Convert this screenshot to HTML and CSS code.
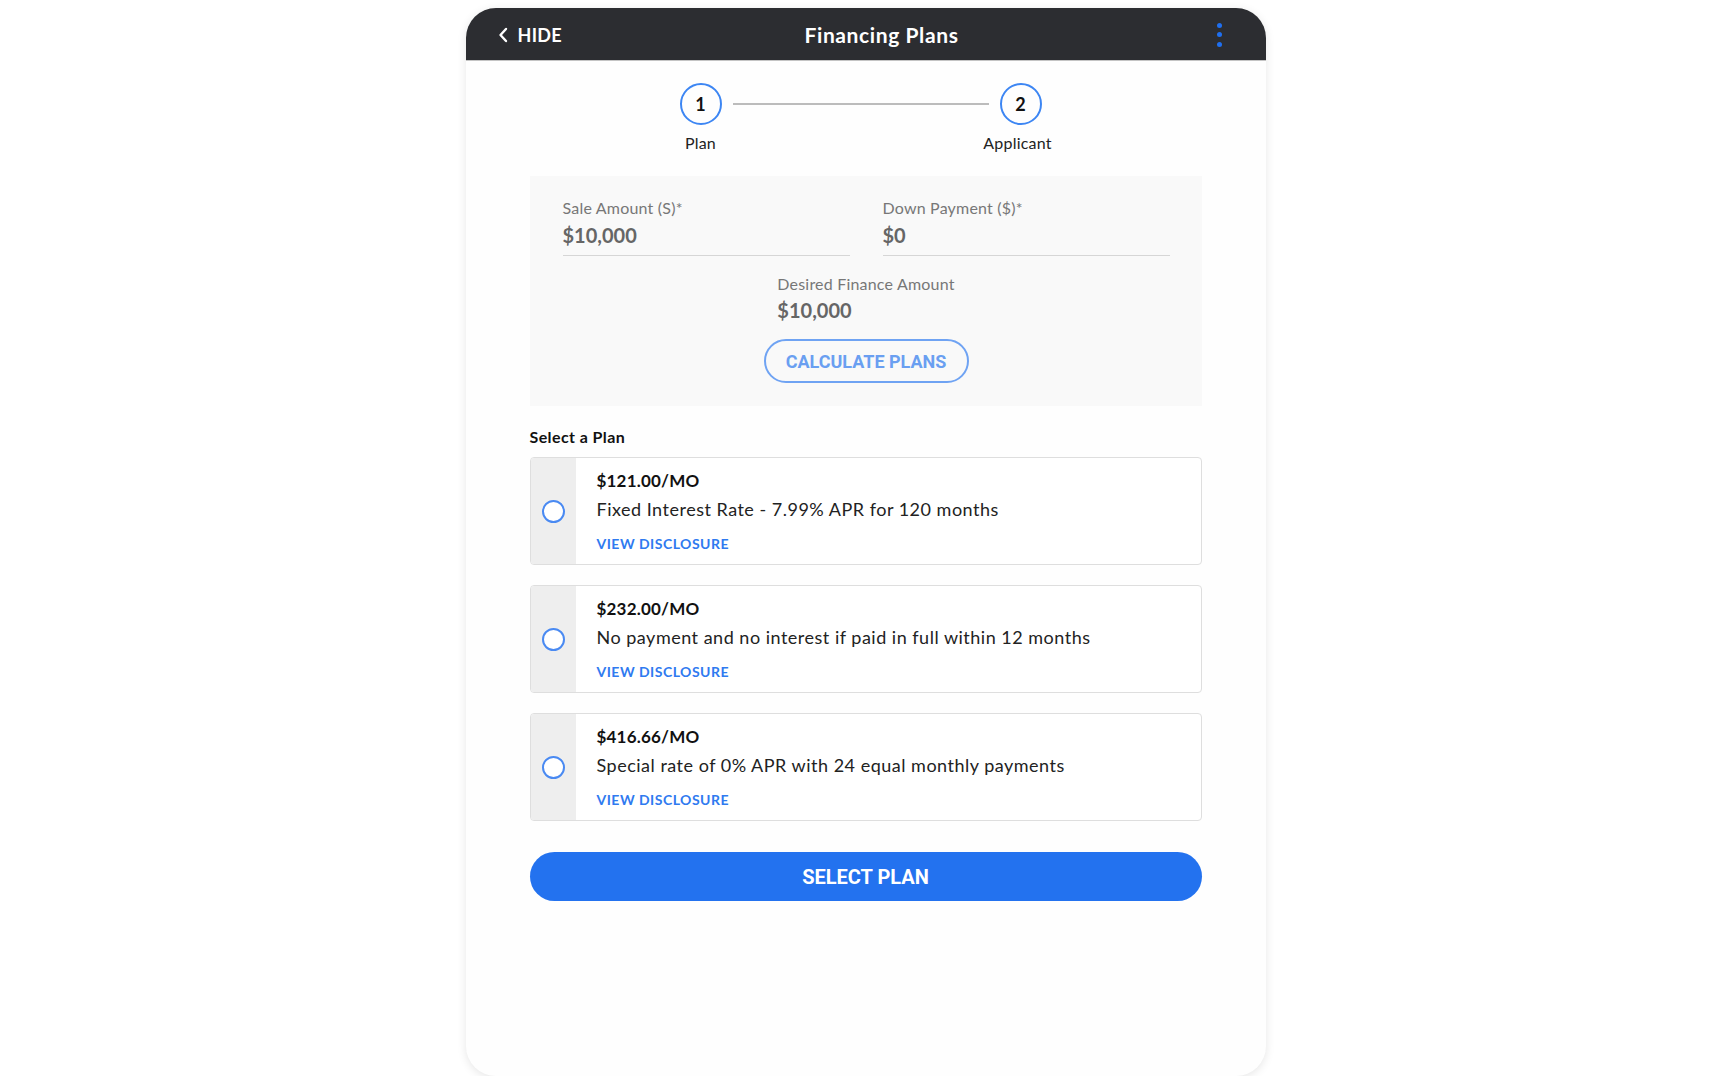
FILE: index.html
```html
<!DOCTYPE html>
<html lang="en">
<head>
<meta charset="utf-8">
<title>Financing Plans</title>
<link rel="stylesheet" href="styles.css">
</head>
<body>
<div class="card">
  <header class="topbar">
    <div class="hide">
      <svg class="chev" width="10" height="16" viewBox="0 0 10 16"><path d="M8 2 L2.5 8 L8 14" fill="none" stroke="#ffffff" stroke-width="2.4" stroke-linecap="round" stroke-linejoin="round"/></svg>
      <span>HIDE</span>
    </div>
    <div class="title">Financing Plans</div>
    <div class="more">
      <span class="dot"></span><span class="dot"></span><span class="dot"></span>
    </div>
  </header>

  <div class="stepper">
    <div class="step">
      <div class="circle">1</div>
      <div class="step-label">Plan</div>
    </div>
    <div class="step-line"></div>
    <div class="step">
      <div class="circle">2</div>
      <div class="step-label step-label-2">Applicant</div>
    </div>
  </div>

  <section class="calc">
    <div class="fields">
      <div class="field">
        <div class="field-label">Sale Amount (S)*</div>
        <div class="field-value">$10,000</div>
      </div>
      <div class="field">
        <div class="field-label">Down Payment ($)*</div>
        <div class="field-value">$0</div>
      </div>
    </div>
    <div class="desired">
      <div class="field-label">Desired Finance Amount</div>
      <div class="field-value">$10,000</div>
    </div>
    <div class="calc-row">
      <button class="btn-outline">CALCULATE PLANS</button>
    </div>
  </section>

  <div class="plans">
    <div class="plans-title">Select a Plan</div>

    <div class="plan">
      <div class="plan-side"><span class="radio"></span></div>
      <div class="plan-body">
        <div class="plan-price">$121.00/MO</div>
        <div class="plan-desc">Fixed Interest Rate - 7.99% APR for 120 months</div>
        <div class="plan-link">VIEW DISCLOSURE</div>
      </div>
    </div>

    <div class="plan">
      <div class="plan-side"><span class="radio"></span></div>
      <div class="plan-body">
        <div class="plan-price">$232.00/MO</div>
        <div class="plan-desc">No payment and no interest if paid in full within 12 months</div>
        <div class="plan-link">VIEW DISCLOSURE</div>
      </div>
    </div>

    <div class="plan">
      <div class="plan-side"><span class="radio"></span></div>
      <div class="plan-body">
        <div class="plan-price">$416.66/MO</div>
        <div class="plan-desc">Special rate of 0% APR with 24 equal monthly payments</div>
        <div class="plan-link">VIEW DISCLOSURE</div>
      </div>
    </div>

    <button class="btn-primary">SELECT PLAN</button>
  </div>
</div>
</body>
</html>
```

FILE: styles.css
```css
* { box-sizing: border-box; }

html, body {
  margin: 0;
  padding: 0;
  background: #ffffff;
}

body {
  font-family: "Lato", "Noto Sans", sans-serif;
  color: #222222;
}

.card {
  width: 800px;
  height: 1068px;
  margin: 8px auto 0;
  background: #fefefe;
  border-radius: 30px;
  overflow: hidden;
  box-shadow: 0 2px 10px rgba(0, 0, 0, 0.10);
}

/* header */
.topbar {
  height: 53px;
  background: #2c2d31;
  border-bottom: 1px solid #c4c4c4;
  display: grid;
  grid-template-columns: 1fr auto 1fr;
  align-items: center;
  padding: 0 44px 0 32px;
  color: #ffffff;
}

.hide {
  display: flex;
  align-items: center;
  gap: 10px;
  font-weight: 700;
  font-size: 18px;
  letter-spacing: 0.3px;
  padding-top: 1px;
}

.chev { display: block; }

.title {
  font-weight: 700;
  font-size: 21px;
  letter-spacing: 0.6px;
  margin-left: 44px;
}

.more {
  justify-self: end;
  display: flex;
  flex-direction: column;
  gap: 4.5px;
  padding-top: 1px;
}

.dot {
  width: 5px;
  height: 5px;
  border-radius: 50%;
  background: #1f6ff0;
}

/* stepper */
.stepper {
  display: flex;
  justify-content: center;
  padding: 22px 10px 0 0;
}

.step {
  width: 64px;
  display: flex;
  flex-direction: column;
  align-items: center;
}

.circle {
  width: 42px;
  height: 42px;
  border: 2px solid #3d86f3;
  border-radius: 50%;
  display: flex;
  align-items: center;
  justify-content: center;
  font-weight: 700;
  font-size: 18px;
  color: #111111;
}

.step-label {
  margin-top: 8px;
  font-size: 16px;
  line-height: 20px;
  letter-spacing: 0.2px;
  white-space: nowrap;
  color: #222222;
}

.step-label-2 { margin-right: 6px; }

.step-line {
  width: 256px;
  height: 2px;
  margin-top: 20px;
  background: #bcbcbc;
}

/* calc panel */
.calc {
  margin: 23px 64px 0;
  background: #f9f9f9;
  padding: 22px 32px 23px 33px;
}

.fields {
  display: grid;
  grid-template-columns: 1fr 1fr;
  gap: 33px;
}

.field {
  border-bottom: 1px solid #d6d6d6;
  padding-bottom: 7px;
}

.field-label {
  font-size: 16px;
  line-height: 20px;
  letter-spacing: 0.2px;
  white-space: nowrap;
  color: #777777;
}

.field-value {
  margin-top: 4px;
  font-size: 20px;
  font-weight: 700;
  line-height: 26px;
  color: #666666;
}

.desired {
  width: max-content;
  margin: 18px auto 0;
}

.desired .field-value { margin-top: 3px; }

.calc-row {
  display: flex;
  justify-content: center;
  margin-top: 16px;
}

.btn-outline {
  width: 205px;
  height: 44px;
  border: 2px solid #6fa3f3;
  border-radius: 22px;
  background: transparent;
  color: #6a9ff1;
  font-family: "Roboto", "Liberation Sans", sans-serif;
  font-weight: 700;
  font-size: 18px;
  padding: 0;
  cursor: pointer;
}

/* plans */
.plans {
  margin: 0 64px;
  display: flex;
  flex-direction: column;
}

.plans-title {
  margin-top: 21px;
  font-size: 16px;
  font-weight: 700;
  line-height: 20px;
  letter-spacing: 0.4px;
  color: #111111;
}

.plan {
  margin-top: 10px;
  display: flex;
  border: 1px solid #dedede;
  border-radius: 4px;
  overflow: hidden;
  background: #ffffff;
}

.plan + .plan { margin-top: 20px; }

.plan-side {
  width: 45px;
  background: #eeeeee;
  display: flex;
  align-items: center;
  justify-content: center;
}

.radio {
  width: 23px;
  height: 23px;
  border: 2px solid #4a8af2;
  border-radius: 50%;
  background: #ffffff;
}

.plan-body {
  padding: 12px 20px 11px 21px;
}

.plan-price {
  font-size: 17px;
  font-weight: 700;
  line-height: 22px;
  letter-spacing: 0.2px;
  color: #111111;
}

.plan-desc {
  margin-top: 5px;
  font-size: 18px;
  line-height: 24px;
  letter-spacing: 0.5px;
  color: #222222;
}

.plan-link {
  margin-top: 14px;
  font-size: 14px;
  font-weight: 700;
  line-height: 18px;
  letter-spacing: 0.5px;
  color: #2f7af0;
}

.btn-primary {
  margin-top: 31px;
  height: 49px;
  border: none;
  border-radius: 25px;
  background: #2372ef;
  color: #ffffff;
  font-family: "Roboto", "Liberation Sans", sans-serif;
  font-weight: 700;
  font-size: 20px;
  cursor: pointer;
}
```
